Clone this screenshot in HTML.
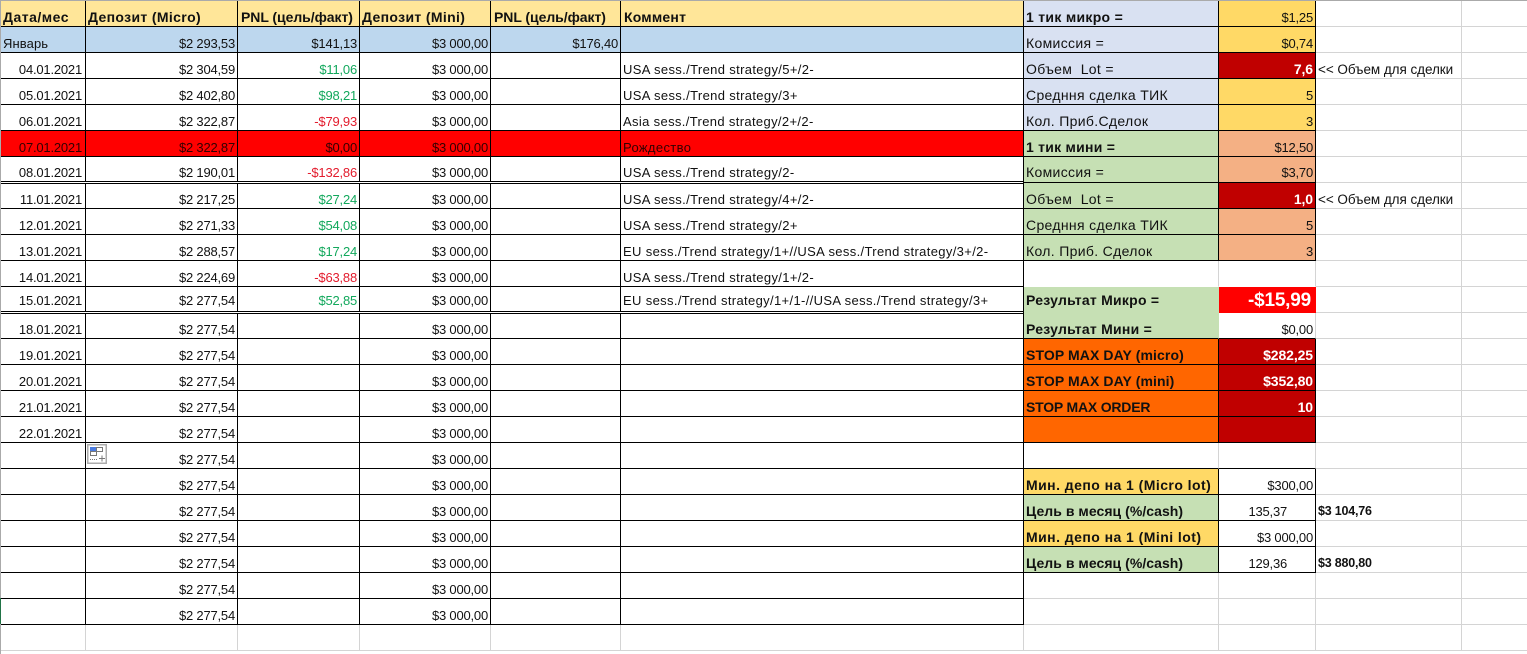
<!DOCTYPE html>
<html lang="ru"><head><meta charset="utf-8"><title>Sheet</title>
<style>
html,body{margin:0;padding:0;background:#fff;width:1527px;height:654px;overflow:hidden}
table{position:absolute;left:0;top:0;border-collapse:separate;border-spacing:0;table-layout:fixed;width:1528px;font:13px/15px "Liberation Sans","Noto Sans CJK SC",sans-serif;letter-spacing:-.2px;color:#111}
tr{height:26px}
tr.h0{height:27px}
td{box-sizing:border-box;border-right:1px solid #000;border-bottom:1px solid #000;padding:0 2px 1px 2px;vertical-align:bottom;white-space:nowrap;text-align:right;overflow:visible}
td:first-child{padding-right:3px}
td:nth-child(n+9){border-color:#d4d4d4;text-align:left}
.l{text-align:left;letter-spacing:.35px}
.b{font-weight:bold}
.g{border-color:#d4d4d4}
.gr{border-right-color:#d4d4d4}
.nb{border-bottom-color:transparent}
.hd td:nth-child(-n+6){background:#ffe699;font-weight:bold;text-align:left;font-size:14px;letter-spacing:.35px}
.jan td:nth-child(-n+6){background:#bdd7ee}
.red td:nth-child(-n+6){background:#f00;color:#300}
.up1 td{padding-bottom:2px}
.up3 td{padding-bottom:4px}
.bl,.gn{text-align:left;font-size:14px;letter-spacing:.33px}
.bl{background:#d9e1f2}
.yl{background:#ffd966}
.gn{background:#c6e0b4}
.pc{background:#f4b084}
.dr{background:#c00000;color:#fff;font-weight:bold;font-size:14px;letter-spacing:-.1px}
.or{background:#ff6600;font-weight:bold;text-align:left;font-size:14px;letter-spacing:.1px}
.lb{background:#ffd966;font-weight:bold;text-align:left;font-size:14px;letter-spacing:.45px}
.gn.b{letter-spacing:.25px}
.up{color:#12a85c}
.dn{color:#e31c2d}
.note{font-size:13.5px;letter-spacing:-.05px}
.big{background:#f00;color:#fff;font-weight:bold;font-size:19px;padding-right:4px;padding-bottom:4px;border-right-color:#f00;border-bottom-color:#f00}
.tot{font-weight:bold;font-size:12.5px}
.pr{padding-right:28px}
.dbl{position:absolute;left:1px;width:1022px;height:1px;border-top:1px solid #000;border-bottom:1px solid #000;background:#fff}
</style></head><body>
<table>
<colgroup><col style="width:86px"><col style="width:152px"><col style="width:122px"><col style="width:131px"><col style="width:130px"><col style="width:403px"><col style="width:195px"><col style="width:97px"><col style="width:146px"><col style="width:66px"></colgroup>
<tr class="h0 hd"><td style="padding-left:3px;letter-spacing:.5px">Дата/мес<td>Депозит (Micro)<td style="padding-left:3px;letter-spacing:-.05px">PNL (цель/факт)<td>Депозит (Mini)<td style="padding-left:3px;letter-spacing:-.05px">PNL (цель/факт)<td style="padding-left:3px;letter-spacing:.2px">Коммент<td class="bl b" style="letter-spacing:.3px">1 тик микро =<td class="yl">$1,25<td><td>
<tr class="jan"><td class="l" style="padding-left:3px;letter-spacing:.1px">Январь<td>$2 293,53<td>$141,13<td>$3 000,00<td>$176,40<td><td class="bl">Комиссия =<td class="yl">$0,74<td><td>
<tr><td>04.01.2021<td>$2 304,59<td class="up">$11,06<td>$3 000,00<td><td class="l">USA sess./Trend strategy/5+/2-<td class="bl">Объем&nbsp; Lot =<td class="dr">7,6<td class="note">&lt;&lt; Объем для сделки<td>
<tr><td>05.01.2021<td>$2 402,80<td class="up">$98,21<td>$3 000,00<td><td class="l">USA sess./Trend strategy/3+<td class="bl">Средння сделка ТИК<td class="yl">5<td><td>
<tr><td>06.01.2021<td>$2 322,87<td class="dn">-$79,93<td>$3 000,00<td><td class="l">Asia sess./Trend strategy/2+/2-<td class="bl">Кол. Приб.Сделок<td class="yl">3<td><td>
<tr class="red"><td>07.01.2021<td>$2 322,87<td>$0,00<td>$3 000,00<td><td class="l">Рождество<td class="gn b">1 тик мини =<td class="pc">$12,50<td><td>
<tr class="up1"><td>08.01.2021<td>$2 190,01<td class="dn">-$132,86<td>$3 000,00<td><td class="l">USA sess./Trend strategy/2-<td class="gn">Комиссия =<td class="pc">$3,70<td><td>
<tr><td>11.01.2021<td>$2 217,25<td class="up">$27,24<td>$3 000,00<td><td class="l">USA sess./Trend strategy/4+/2-<td class="gn">Объем&nbsp; Lot =<td class="dr">1,0<td class="note">&lt;&lt; Объем для сделки<td>
<tr><td>12.01.2021<td>$2 271,33<td class="up">$54,08<td>$3 000,00<td><td class="l">USA sess./Trend strategy/2+<td class="gn">Средння сделка ТИК<td class="pc">5<td><td>
<tr><td>13.01.2021<td>$2 288,57<td class="up">$17,24<td>$3 000,00<td><td class="l">EU sess./Trend strategy/1+//USA sess./Trend strategy/3+/2-<td class="gn">Кол. Приб. Сделок<td class="pc">3<td><td>
<tr><td>14.01.2021<td>$2 224,69<td class="dn">-$63,88<td>$3 000,00<td><td class="l">USA sess./Trend strategy/1+/2-<td class="gr nb"><td class="gr nb"><td><td>
<tr class="up3"><td>15.01.2021<td>$2 277,54<td class="up">$52,85<td>$3 000,00<td><td class="l">EU sess./Trend strategy/1+/1-//USA sess./Trend strategy/3+<td class="gn b" style="border-color:#c6e0b4">Результат Микро =<td class="big">-$15,99<td><td>
<tr><td>18.01.2021<td>$2 277,54<td><td>$3 000,00<td><td><td class="gn b" style="border-right-color:#c6e0b4">Результат Мини =<td class="gr">$0,00<td><td>
<tr><td>19.01.2021<td>$2 277,54<td><td>$3 000,00<td><td><td class="or">STOP MAX DAY (micro)<td class="dr">$282,25<td><td>
<tr><td>20.01.2021<td>$2 277,54<td><td>$3 000,00<td><td><td class="or">STOP MAX DAY (mini)<td class="dr">$352,80<td><td>
<tr><td>21.01.2021<td>$2 277,54<td><td>$3 000,00<td><td><td class="or" style="letter-spacing:-.2px">STOP MAX ORDER<td class="dr">10<td><td>
<tr><td>22.01.2021<td>$2 277,54<td><td>$3 000,00<td><td><td class="or"><td class="dr"><td><td>
<tr><td><td>$2 277,54<td><td>$3 000,00<td><td><td class="gr"><td class="gr"><td><td>
<tr><td><td>$2 277,54<td><td>$3 000,00<td><td><td class="lb">Мин. депо на 1 (Micro lot)<td>$300,00<td><td>
<tr><td><td>$2 277,54<td><td>$3 000,00<td><td><td class="gn b" style="letter-spacing:.05px">Цель в месяц (%/cash)<td class="pr">135,37<td class="tot">$3 104,76<td>
<tr><td><td>$2 277,54<td><td>$3 000,00<td><td><td class="lb">Мин. депо на 1 (Mini lot)<td>$3 000,00<td><td>
<tr><td><td>$2 277,54<td><td>$3 000,00<td><td><td class="gn b" style="letter-spacing:.05px">Цель в месяц (%/cash)<td class="pr">129,36<td class="tot">$3 880,80<td>
<tr><td><td>$2 277,54<td><td>$3 000,00<td><td><td class="g"><td class="g"><td><td>
<tr><td><td>$2 277,54<td><td>$3 000,00<td><td><td class="g"><td class="g"><td><td>
<tr><td class="g"><td class="g"><td class="g"><td class="g"><td class="g"><td class="g"><td class="g"><td class="g"><td><td>
</table>
<div class="dbl" style="top:181px"></div>
<div class="dbl" style="top:311px"></div>
<div style="position:absolute;left:0;top:0;width:1527px;height:1px;background:#aaa"></div>
<div style="position:absolute;left:0;top:0;width:1px;height:654px;background:#aaa"></div>
<div style="position:absolute;left:0;top:598px;width:1px;height:26px;background:#217346"></div>
<svg style="position:absolute;left:87px;top:444px" width="20" height="20" viewBox="0 0 20 20">
<rect x=".75" y=".75" width="18.5" height="18.5" fill="#fff" stroke="#ababab" stroke-width="1.5"/>
<rect x="3.5" y="3.5" width="6" height="4" fill="#4a7be0" stroke="#4a7be0"/>
<rect x="9.5" y="3.5" width="6" height="4" fill="#fff" stroke="#777"/>
<rect x="3.5" y="7.5" width="6" height="4" fill="#fff" stroke="#777"/>
<path d="M3 15.5h7" stroke="#777" stroke-dasharray="1 1" fill="none"/>
<path d="M12 14.5h6M15 11.5v6" stroke="#777" fill="none"/>
</svg>
</body></html>
